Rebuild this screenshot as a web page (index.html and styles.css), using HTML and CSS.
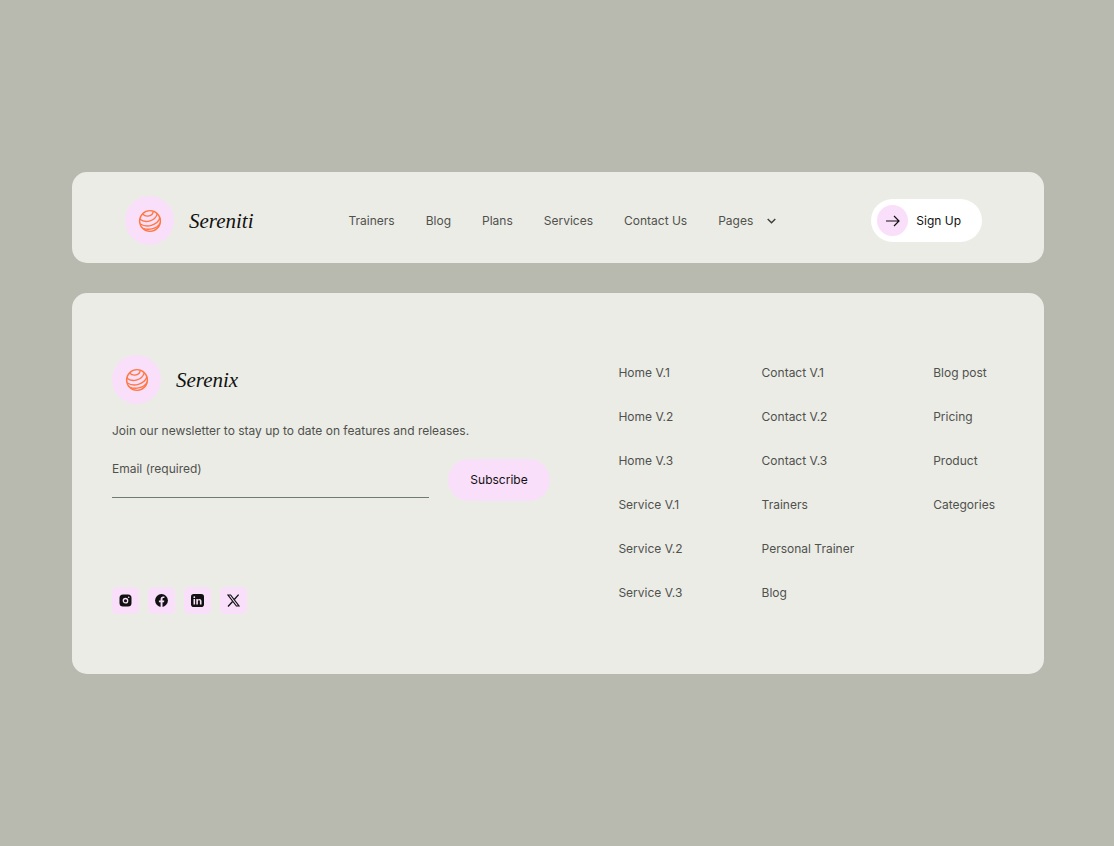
FILE: index.html
```html
<!DOCTYPE html>
<html lang="en">
    <head>
        <title>Sereniti</title>
        <meta charset="UTF-8">
        <meta name="viewport" content="width=device-width, initial-scale=1">
        <link rel="stylesheet" href="styles.css">
    </head>
    <body>
        <header class="card header">
            <a href="#" class="brand">
                <span class="brand-mark">
                    <svg width="24" height="24" viewBox="0 0 24 24" fill="none" stroke="#ff7742" stroke-width="1.4">
                        <circle cx="12" cy="12" r="10.4"/>
                        <path d="M4.600 5C8 8.500 14.500 7.500 15.300 2.300M1.900 10.300C7.500 14.800 17.500 12 19.300 4.700M2.300 15C8.500 18.800 19 17 22 8.800M4.800 19.300C11 21.500 19 19.800 22 14.300"/>
                    </svg>
                </span>
                <span class="brand-name">Sereniti</span>
            </a>

            <nav class="main-nav">
                <a href="#">Trainers</a>
                <a href="#">Blog</a>
                <a href="#">Plans</a>
                <a href="#">Services</a>
                <a href="#">Contact Us</a>
                <a href="#" class="has-menu">Pages
                    <svg width="9" height="6" viewBox="0 0 9 6" fill="none" stroke="#3c3d3a" stroke-width="1.4"><path d="M.7.9l3.800 3.800L8.300.9"/></svg>
                </a>
            </nav>

            <button type="button" class="signup">
                <span class="signup-icon">
                    <svg width="14" height="12" viewBox="0 0 14 12" fill="none" stroke="#111" stroke-width="1.2"><path d="M0 6h13M8 1l5 5-5 5"/></svg>
                </span>
                Sign Up
            </button>
        </header>

        <footer class="card footer">
            <div class="newsletter">
                <a href="#" class="brand">
                    <span class="brand-mark">
                        <svg width="24" height="24" viewBox="0 0 24 24" fill="none" stroke="#ff7742" stroke-width="1.4">
                            <circle cx="12" cy="12" r="10.4"/>
                            <path d="M4.600 5C8 8.500 14.500 7.500 15.300 2.300M1.900 10.300C7.500 14.800 17.500 12 19.300 4.700M2.300 15C8.500 18.800 19 17 22 8.800M4.800 19.300C11 21.500 19 19.800 22 14.300"/>
                        </svg>
                    </span>
                    <span class="brand-name">Serenix</span>
                </a>
                <p>Join our newsletter to stay up to date on features and releases.</p>
                <form class="subscribe-form">
                    <div class="field">
                        <label for="email">Email (required)</label>
                        <input type="email" id="email" name="email" required>
                    </div>
                    <button type="submit" class="subscribe">Subscribe</button>
                </form>
                <div class="social">
                    <a href="#" aria-label="Instagram">
                        <svg width="13" height="13" viewBox="0 0 13 13">
                            <rect x=".5" y=".5" width="12" height="12" rx="3.500" fill="#111"/>
                            <circle cx="6.500" cy="6.700" r="2.200" fill="none" stroke="#fadffa" stroke-width="1.300"/>
                            <circle cx="9.700" cy="3.300" r=".8" fill="#fadffa"/>
                        </svg>
                    </a>
                    <a href="#" aria-label="Facebook">
                        <svg width="13" height="13" viewBox="0 0 13 13">
                            <circle cx="6.500" cy="6.500" r="6.400" fill="#111"/>
                            <path d="M5.600 13V8.300H3.900V6.500h1.700V5.100c0-1.700 1-2.600 2.500-2.600l1.300.1v1.500h-.8c-.8 0-1.100.4-1.100 1v1.400h1.800L9 8.300H7.500V13z" fill="#fadffa"/>
                        </svg>
                    </a>
                    <a href="#" aria-label="LinkedIn">
                        <svg width="13" height="13" viewBox="0 0 13 13">
                            <rect width="13" height="13" rx="2.800" fill="#111"/>
                            <path d="M2.500 5h1.600v5.500H2.500zM5.300 5h1.500v.8c.4-.6.9-.9 1.700-.9 1.500 0 2 .9 2 2.400v3.200H8.900V7.600c0-.8-.2-1.300-.9-1.300-.8 0-1.100.5-1.100 1.300v2.900H5.300z" fill="#fadffa"/>
                            <circle cx="3.300" cy="3.200" r=".9" fill="#fadffa"/>
                        </svg>
                    </a>
                    <a href="#" aria-label="X">
                        <svg width="13" height="13" viewBox="0 0 13 13" fill="none" stroke="#111">
                            <path d="M1 1h2.600l8.400 11H9.400z" stroke-width="1.200"/>
                            <path d="M11.600.6L7.300 5.500M5.600 7.500L1 12.500" stroke-width="1.300"/>
                        </svg>
                    </a>
                </div>
            </div>

            <nav class="footer-nav">
                <ul>
                    <li><a href="#">Home V.1</a></li>
                    <li><a href="#">Home V.2</a></li>
                    <li><a href="#">Home V.3</a></li>
                    <li><a href="#">Service V.1</a></li>
                    <li><a href="#">Service V.2</a></li>
                    <li><a href="#">Service V.3</a></li>
                </ul>
                <ul>
                    <li><a href="#">Contact V.1</a></li>
                    <li><a href="#">Contact V.2</a></li>
                    <li><a href="#">Contact V.3</a></li>
                    <li><a href="#">Trainers</a></li>
                    <li><a href="#">Personal Trainer</a></li>
                    <li><a href="#">Blog</a></li>
                </ul>
                <ul>
                    <li><a href="#">Blog post</a></li>
                    <li><a href="#">Pricing</a></li>
                    <li><a href="#">Product</a></li>
                    <li><a href="#">Categories</a></li>
                </ul>
            </nav>
        </footer>
    </body>
</html>
```
FILE: styles.css
```css
* {
    box-sizing: border-box;
}

body {
    margin: 0;
    min-height: 100vh;
    padding: 30px 70px 30px 72px;
    display: flex;
    flex-direction: column;
    justify-content: center;
    gap: 30px;
    background-color: #b8b9af;
    color: #50514d;
    font-family: Inter, "Liberation Sans", sans-serif;
    font-size: 12px;
    font-weight: 400;
    line-height: 20px;
}

a {
    color: inherit;
    text-decoration: none;
}

button, input {
    font: inherit;
    border: 0;
}

button {
    color: #111;
    cursor: pointer;
}

svg {
    display: block;
}

.card {
    display: flex;
    justify-content: space-between;
    background-color: #ebece6;
    border-radius: 15px;
}

.header {
    align-items: center;
    padding: 24px 62px 18px 53px;
}

/* logo */
.brand {
    display: flex;
    align-items: center;
    gap: 15px;
    color: #111;
}

.brand-mark {
    display: flex;
    align-items: center;
    justify-content: center;
    width: 49px;
    height: 49px;
    border-radius: 50%;
    background-color: #fadffa;
}

.brand-name {
    font-family: "Liberation Serif", serif;
    font-size: 21px;
    font-style: italic;
    line-height: 28px;
}

.main-nav {
    display: flex;
    gap: 31px;
}

.has-menu {
    display: flex;
    align-items: center;
    gap: 14px;
}

.signup {
    display: flex;
    align-items: center;
    gap: 8px;
    padding: 6px 21px 6px 6px;
    border-radius: 22px;
    background-color: #fff;
}

.signup-icon {
    display: flex;
    align-items: center;
    justify-content: center;
    width: 31px;
    height: 31px;
    border-radius: 50%;
    background-color: #fadffa;
}

/* footer */
.footer {
    padding: 62px 49px 60px 40px;
}

.newsletter {
    width: 438px;
    display: flex;
    flex-direction: column;
}

.newsletter p {
    margin: 17px 0 18px;
}

.subscribe-form {
    display: flex;
    gap: 19px;
}

.field {
    flex: 1;
}

.field label {
    display: block;
}

.field input {
    display: block;
    width: 100%;
    height: 19px;
    padding: 0;
    background: none;
    border-bottom: 1px solid #6f7d70;
    outline: none;
}

.subscribe {
    width: 102px;
    height: 42px;
    padding: 0;
    border-radius: 21px;
    background-color: #fadffa;
}

.social {
    display: flex;
    gap: 9px;
    margin-top: 86px;
}

.social a {
    display: flex;
    align-items: center;
    justify-content: center;
    width: 27px;
    height: 27px;
    border-radius: 5px;
    background-color: #fadffa;
}

.footer-nav {
    display: flex;
    gap: 79px;
    padding-top: 8px;
}

.footer-nav ul {
    display: flex;
    flex-direction: column;
    gap: 24px;
    margin: 0;
    padding: 0;
    list-style: none;
}
```
